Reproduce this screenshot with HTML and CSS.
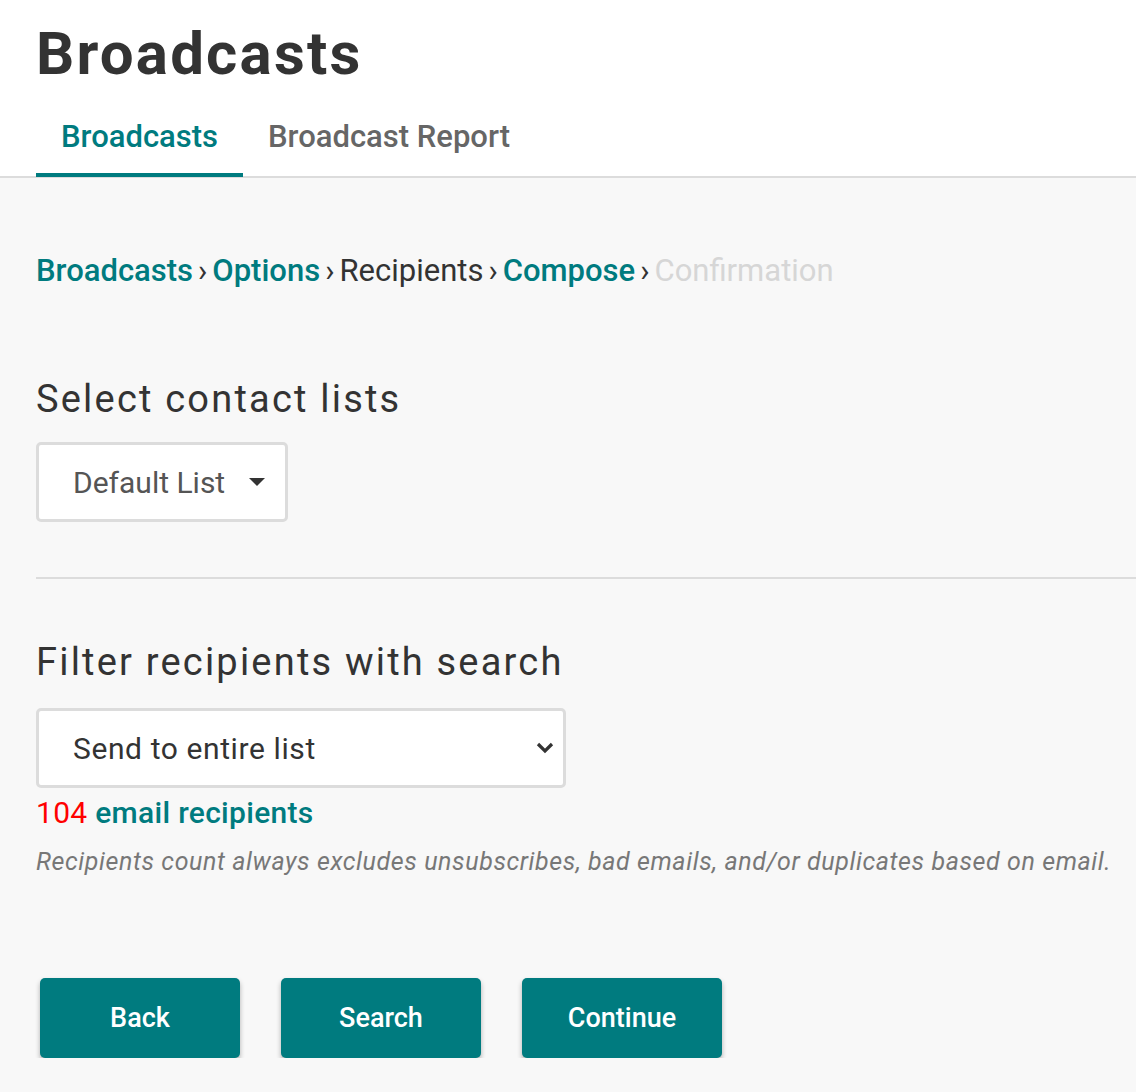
FILE: index.html
```html
<!DOCTYPE html>
<html lang="en">
<head>
    <meta charset="UTF-8">
    <title>Broadcasts</title>
    <link rel="stylesheet" href="styles.css">
</head>
<body>
    <header class="page-header">
        <h1>Broadcasts</h1>
        <nav class="tabs">
            <a class="tab active">Broadcasts</a>
            <a class="tab">Broadcast Report</a>
        </nav>
    </header>

    <main class="content">
        <div class="breadcrumb">
            <a class="crumb link">Broadcasts</a><span class="sep">›</span><a class="crumb link">Options</a><span class="sep">›</span><span class="crumb current">Recipients</span><span class="sep">›</span><a class="crumb link">Compose</a><span class="sep">›</span><span class="crumb disabled">Confirmation</span>
        </div>

        <section class="block">
            <h3>Select contact lists</h3>
            <button class="dropdown">Default List <span class="caret"></span></button>
        </section>

        <hr class="divider">

        <section class="block">
            <h3>Filter recipients with search</h3>
            <div class="select-box">
                <span>Send to entire list</span>
                <svg class="chevron" width="18" height="12" viewBox="0 0 18 12"><path d="M2 2 L9 9 L16 2" fill="none" stroke="#333" stroke-width="3.2"/></svg>
            </div>
            <div class="count"><span class="num">104</span> email recipients</div>
            <p class="note">Recipients count always excludes unsubscribes, bad emails, and/or duplicates based on email.</p>
        </section>

        <div class="actions">
            <button class="btn">Back</button>
            <button class="btn">Search</button>
            <button class="btn">Continue</button>
        </div>
    </main>
</body>
</html>
```

FILE: styles.css
```css
body {
    margin: 0;
    font-family: Roboto, "Noto Sans", sans-serif;
    background-color: #f8f8f8;
    color: #333;
}

.page-header {
    background: white;
    border-bottom: 2px solid #dcdcdc;
    padding: 0 36px;
}

h1 {
    margin: 0;
    padding-top: 22px;
    font-size: 60px;
    font-weight: 700;
    line-height: 64px;
    color: #333;
    letter-spacing: 2.2px;
}

.tabs {
    display: flex;
    margin-top: 33px;
}

.tab {
    display: block;
    padding: 0 25px 18px;
    font-size: 31px;
    font-weight: 500;
    line-height: 36px;
    color: #666;
    border-bottom: 4px solid transparent;
    margin-bottom: -1px;
}

.tab.active {
    color: #007b7f;
    border-bottom-color: #007b7f;
}

.content {
    padding: 75px 0 0 36px;
}

.breadcrumb {
    font-size: 31px;
    line-height: 36px;
}

.crumb.link {
    color: #007b7f;
    font-weight: 500;
}

.crumb.current {
    color: #333;
}

.crumb.disabled {
    color: #d6d6d6;
}

.sep {
    color: #333;
    margin: 0 5px;
}

.block h3 {
    margin: 0;
    font-size: 38px;
    font-weight: 400;
    line-height: 44px;
    letter-spacing: 2.2px;
    color: #333;
}

.block:first-of-type {
    margin-top: 88px;
}

.dropdown {
    display: flex;
    align-items: center;
    margin-top: 21px;
    width: 252px;
    height: 80px;
    padding: 0 0 0 34px;
    background: white;
    border: 3px solid #dcdcdc;
    border-radius: 5px;
    font-family: inherit;
    font-size: 30px;
    color: #555;
}

.caret {
    width: 0;
    height: 0;
    border-left: 8px solid transparent;
    border-right: 8px solid transparent;
    border-top: 8px solid #333;
    margin-left: 24px;
}

.divider {
    border: 0;
    border-top: 2px solid #dcdcdc;
    margin: 55px 0 61px;
}

.select-box {
    display: flex;
    align-items: center;
    justify-content: space-between;
    box-sizing: border-box;
    margin-top: 24px;
    width: 530px;
    height: 80px;
    padding: 0 9px 0 34px;
    background: white;
    border: 3px solid #dcdcdc;
    border-radius: 5px;
    font-size: 30px;
    letter-spacing: 0.6px;
    color: #333;
}

.count {
    margin-top: 7px;
    font-size: 30px;
    font-weight: 500;
    letter-spacing: 0.3px;
    color: #007b7f;
    line-height: 36px;
}

.count .num {
    color: #ff0000;
    font-weight: 400;
}

.note {
    margin: 16px 0 0;
    font-size: 25px;
    font-style: italic;
    letter-spacing: 0.6px;
    color: #777;
    line-height: 30px;
}

.actions {
    display: flex;
    gap: 41px;
    margin: 101px 0 0 4px;
}

.btn {
    width: 200px;
    height: 80px;
    background: #007b7f;
    color: white;
    border: 0;
    border-radius: 5px;
    font-family: inherit;
    font-size: 27px;
    font-weight: 500;
    box-shadow: 0 3px 5px rgba(0, 0, 0, 0.3);
}
```
